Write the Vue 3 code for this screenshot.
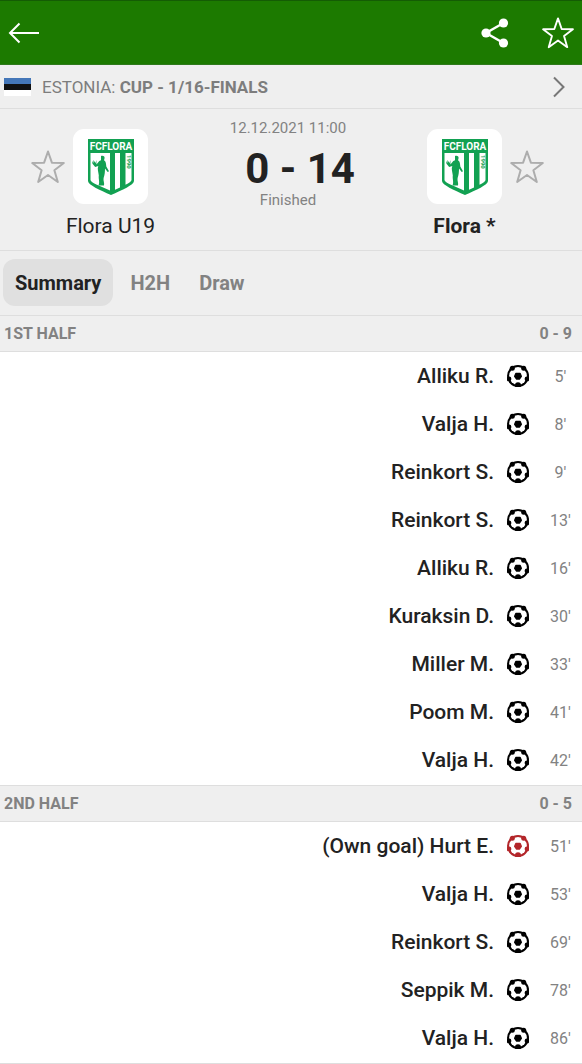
<script setup>
import { ref } from 'vue'

const tabs = ['Summary', 'H2H', 'Draw']
const active = ref('Summary')

const halves = [
  {
    title: '1ST HALF',
    score: '0 - 9',
    goals: [
      { player: 'Alliku R.', minute: "5'" },
      { player: 'Valja H.', minute: "8'" },
      { player: 'Reinkort S.', minute: "9'" },
      { player: 'Reinkort S.', minute: "13'" },
      { player: 'Alliku R.', minute: "16'" },
      { player: 'Kuraksin D.', minute: "30'" },
      { player: 'Miller M.', minute: "33'" },
      { player: 'Poom M.', minute: "41'" },
      { player: 'Valja H.', minute: "42'" },
    ],
  },
  {
    title: '2ND HALF',
    score: '0 - 5',
    goals: [
      { player: '(Own goal) Hurt E.', minute: "51'", own: true },
      { player: 'Valja H.', minute: "53'" },
      { player: 'Reinkort S.', minute: "69'" },
      { player: 'Seppik M.', minute: "78'" },
      { player: 'Valja H.', minute: "86'" },
    ],
  },
]

const teams = [
  { name: 'Flora U19', side: 'home', winner: false },
  { name: 'Flora *', side: 'away', winner: true },
]
</script>

<template>
  <div class="page">
    <svg class="defs" aria-hidden="true">
      <symbol id="star" viewBox="0 0 36 36">
        <path
          d="M18 2.5 L21.9 13.7 L33.8 14 L24.4 21.2 L27.8 33 L18 26 L8.2 33 L11.6 21.2 L2.2 14 L14.1 13.7 Z"
          fill="none" stroke="currentColor" stroke-width="2" stroke-linejoin="round"
        />
      </symbol>
      <symbol id="ball" viewBox="0 0 22 22">
        <circle cx="11" cy="11" r="11" fill="currentColor" />
        <circle cx="11" cy="11" r="8.9" fill="#fff" />
        <g fill="currentColor">
          <circle cx="16.7" cy="3.3" r="2.5" />
          <circle cx="20" cy="13.9" r="2.4" />
          <circle cx="11" cy="20.3" r="3" />
          <circle cx="2" cy="13.9" r="2.4" />
          <circle cx="5.3" cy="3.3" r="2.5" />
        </g>
        <path
          d="M9 8.4 H13 L14.3 11.4 L12.4 14 H9.6 L7.7 11.4 Z"
          fill="currentColor" stroke="currentColor" stroke-width="1.4" stroke-linejoin="round"
        />
      </symbol>
    </svg>

    <header class="topbar">
      <button class="icon-btn" type="button" aria-label="Back">
        <svg width="32" height="22" viewBox="0 0 32 22" fill="none" stroke="currentColor" stroke-width="2">
          <path d="M31 11 H2 M11.5 1.5 L2 11 L11.5 20.5" />
        </svg>
      </button>
      <div class="actions">
        <button class="icon-btn" type="button" aria-label="Share">
          <svg width="28" height="30" viewBox="0 0 28 30">
            <path d="M22.5 5 L5 15 L22.5 25" fill="none" stroke="currentColor" stroke-width="2.4" />
            <circle cx="22.5" cy="5" r="4.6" fill="currentColor" />
            <circle cx="5" cy="15" r="4.6" fill="currentColor" />
            <circle cx="22.5" cy="25" r="4.6" fill="currentColor" />
          </svg>
        </button>
        <button class="icon-btn" type="button" aria-label="Add match to favourites">
          <svg width="34" height="34"><use href="#star" /></svg>
        </button>
      </div>
    </header>

    <a class="league" href="#">
      <svg class="flag" width="27" height="18" viewBox="0 0 27 18" aria-hidden="true">
        <rect width="27" height="18" fill="#fff" />
        <rect width="27" height="12" fill="#111" />
        <rect width="27" height="6" fill="#4577b8" />
      </svg>
      <span class="league-name">ESTONIA: <b>CUP - 1/16-FINALS</b></span>
      <svg width="12" height="22" viewBox="0 0 12 22" fill="none" stroke="#777" stroke-width="2" aria-hidden="true">
        <path d="M1 1.5 L10.5 11 L1 20.5" />
      </svg>
    </a>

    <section class="match">
      <div v-for="t in teams" :key="t.side" class="team" :class="t.side">
        <div class="badge-row">
          <button class="icon-btn fav" type="button" :aria-label="'Add ' + t.name + ' to favourites'">
            <svg width="36" height="36"><use href="#star" /></svg>
          </button>
          <div class="badge">
            <svg width="46" height="56" viewBox="0 0 46 56" aria-hidden="true">
              <path d="M0 0 H46 V42 C46 46 34 51 23 56 C12 51 0 46 0 42 Z" fill="#12a152" />
              <path d="M2.5 14 H22 V51.5 C13 47.6 2.5 43.5 2.5 41 Z" fill="#fff" />
              <path d="M27 14 H32 V48.4 L27 50.8 Z" fill="#fff" />
              <path d="M37.5 14 H43.5 V41 C43.5 42.2 41 44 37.5 45.8 Z" fill="#fff" />
              <path
                d="M13 17 C15.4 16.2 17 17.6 16.5 19.4 L16 21.2 C18 22.3 18 25 18.3 27.4 L21 32.3 L19.7 33 L17 29.5 C17 33 16.7 36 15.6 39 C15 41.6 16.7 44 16 46.6 L10.5 46.6 C12 43 10.3 40 10.8 36.5 C10.5 33 9 30 10.3 27 L7.2 28 L4.5 24.8 L4.1 22 L5.5 24 L5.4 21 L7.5 24 L8.4 21 L8.4 25.4 L11.3 22 L13 21.2 Z"
                fill="#12a152"
              />
              <text x="23" y="11" text-anchor="middle" class="crest-name">FCFLORA</text>
              <text transform="translate(38.5 16) rotate(90)" class="crest-year">1990</text>
            </svg>
          </div>
        </div>
        <div class="team-name" :class="{ winner: t.winner }">{{ t.name }}</div>
      </div>
      <div class="result">
        <div class="small">12.12.2021 11:00</div>
        <div class="score">0 - 14</div>
        <div class="small">Finished</div>
      </div>
    </section>

    <nav class="tabs">
      <button
        v-for="tab in tabs" :key="tab" type="button" class="tab"
        :class="{ active: tab === active }" @click="active = tab"
      >{{ tab }}</button>
    </nav>

    <section v-for="half in halves" :key="half.title" class="half">
      <h2 class="half-head"><span>{{ half.title }}</span><span>{{ half.score }}</span></h2>
      <ul class="goals">
        <li v-for="goal in half.goals" :key="goal.minute" class="goal">
          <span>{{ goal.player }}</span>
          <svg class="ball" :class="{ own: goal.own }" width="22" height="22" aria-hidden="true"><use href="#ball" /></svg>
          <span class="minute">{{ goal.minute }}</span>
        </li>
      </ul>
    </section>
  </div>
</template>

<style>
body {
  background: #fff;
}
</style>

<style scoped>
.page {
  font-family: Roboto, "Liberation Sans", sans-serif;
  color: #222;
}
.defs {
  display: block;
  width: 0;
  height: 0;
}
.crest-name {
  font: 700 10px Roboto, sans-serif;
  fill: #fff;
}
.crest-year {
  font: 700 6px Roboto, sans-serif;
  fill: #12a152;
}
button {
  margin: 0;
  border: 0;
  background: none;
  font-family: inherit;
  color: inherit;
  cursor: pointer;
}
.icon-btn {
  display: flex;
  padding: 0;
}
.topbar {
  display: flex;
  align-items: center;
  justify-content: space-between;
  box-sizing: border-box;
  height: 65px;
  padding: 0 7px 0 8px;
  border-top: 1px solid #145c04;
  border-bottom: 1px solid #2f7a1c;
  background: #1c7a00;
  color: #fff;
}
.actions {
  display: flex;
  align-items: center;
  gap: 32px;
}
.league {
  display: flex;
  align-items: center;
  height: 43px;
  padding: 0 17px 0 4px;
  border-bottom: 1px solid #dedede;
  background: #efefef;
  color: #7d7d7d;
  font-size: 17px;
  text-decoration: none;
}
.league-name {
  flex: 1;
  margin-left: 11px;
}
.match {
  display: grid;
  grid-template-columns: 1fr 180px 1fr;
  height: 141px;
  border-bottom: 1px solid #dedede;
  background: #efefef;
}
.team {
  display: flex;
  flex-direction: column;
  gap: 8px;
  padding-top: 20px;
}
.home {
  grid-area: 1 / 1;
  padding-left: 30px;
}
.away {
  grid-area: 1 / 3;
  padding-right: 37px;
}
.badge-row {
  display: flex;
  align-items: center;
  gap: 7px;
}
.away .badge-row {
  flex-direction: row-reverse;
}
.fav {
  color: #adadad;
}
.badge {
  display: flex;
  align-items: center;
  justify-content: center;
  width: 75px;
  height: 75px;
  border-radius: 11px;
  background: #fff;
}
.team-name {
  width: 161px;
  font-size: 21px;
  line-height: 28px;
  text-align: center;
}
.away .team-name {
  align-self: flex-end;
}
.winner {
  font-weight: 700;
}
.result {
  grid-area: 1 / 2;
  padding: 9px 6px 0 0;
  text-align: center;
}
.small {
  color: #828282;
  font-size: 15px;
  line-height: 20px;
}
.score {
  padding: 10px 0 0 24px;
  font-size: 42px;
  font-weight: 700;
  line-height: 42px;
  white-space: nowrap;
}
.tabs {
  display: flex;
  gap: 5px;
  height: 56px;
  padding: 8px 3px 0;
  background: #efefef;
}
.tab {
  height: 47px;
  padding: 0 12px;
  border-radius: 12px;
  color: #828282;
  font-size: 20px;
  font-weight: 700;
}
.tab.active {
  background: #e0e0e0;
  color: #222;
}
.half-head {
  display: flex;
  align-items: center;
  justify-content: space-between;
  height: 35px;
  margin: 0;
  padding: 0 10px 0 4px;
  border-top: 1px solid #dedede;
  border-bottom: 1px solid #dedede;
  background: #efefef;
  color: #828282;
  font-size: 16px;
  font-weight: 700;
}
.goals {
  margin: 0;
  padding: 0 0 1px;
  list-style: none;
}
.half:last-child .goals {
  border-bottom: 1px solid #dedede;
}
.goal {
  display: flex;
  align-items: center;
  justify-content: flex-end;
  height: 48px;
  padding-right: 7px;
  font-size: 21px;
  font-weight: 500;
}
.ball {
  margin-left: 13px;
  color: #000;
}
.ball.own {
  color: #b3262a;
}
.minute {
  width: 29px;
  margin-left: 17px;
  color: #828282;
  font-size: 16px;
  font-weight: 400;
  text-align: center;
}
</style>
